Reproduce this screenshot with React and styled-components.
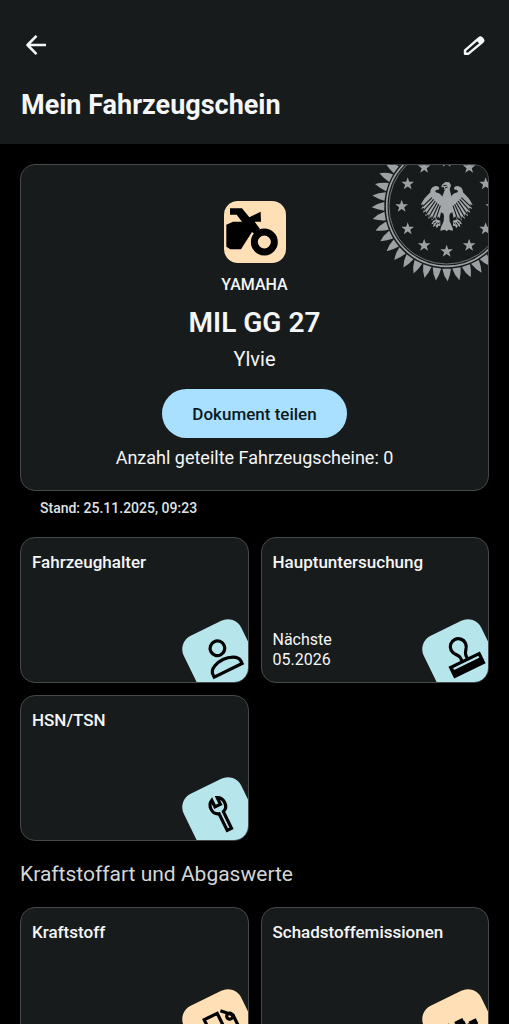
import React from "react";
import styled, { createGlobalStyle } from "styled-components";

const GlobalStyle = createGlobalStyle`
  * {
    box-sizing: border-box;
  }

  body {
    margin: 0;
    background: #000;
    color: #f4f6f7;
    font-family: Roboto, "Liberation Sans", sans-serif;
  }

  h1, h2, h3, p {
    margin: 0;
  }

  button {
    font-family: inherit;
    color: inherit;
    cursor: pointer;
  }
`;

const Screen = styled.div`
  display: flex;
  flex-direction: column;
  height: 100vh;
`;

const Header = styled.header`
  flex: none;
  background: #181b1c;
  padding: 24px 14px 20px 15px;
`;

const Toolbar = styled.div`
  display: flex;
  justify-content: space-between;
  margin-bottom: 20px;
`;

const IconButton = styled.button`
  display: flex;
  align-items: center;
  justify-content: center;
  width: 42px;
  height: 42px;
  padding: 0;
  border: 0;
  background: none;
`;

const Title = styled.h1`
  padding-left: 6px;
  font-size: 27px;
  font-weight: 700;
  line-height: 38px;
`;

const Content = styled.main`
  flex: 1;
  overflow-y: auto;
  scrollbar-width: none;
  padding: 20px;
`;

const DocumentCard = styled.section`
  position: relative;
  overflow: hidden;
  display: flex;
  flex-direction: column;
  align-items: center;
  padding: 36px 20px 20px;
  border: 1px solid #46494a;
  border-radius: 15px;
  background: #181b1c;
`;

const Seal = styled.svg`
  position: absolute;
  top: 0;
  right: 0;
  width: 117px;
  height: 117px;
`;

const VehicleIcon = styled.svg`
  width: 62px;
  height: 62px;
  border-radius: 14px;
  background: #fedfb6;
`;

const Brand = styled.p`
  margin-top: 12px;
  font-size: 16px;
  font-weight: 500;
  line-height: 20px;
`;

const Plate = styled.h2`
  margin-top: 8px;
  font-size: 28px;
  font-weight: 600;
  line-height: 40px;
`;

const Nickname = styled.p`
  margin-top: 2px;
  font-size: 20px;
  line-height: 28px;
`;

const ShareButton = styled.button`
  margin-top: 16px;
  padding: 0 30px;
  height: 49px;
  border: 0;
  border-radius: 25px;
  background: #a9e0ff;
  color: #0b1a22;
  font-size: 17px;
  font-weight: 500;
`;

const ShareCount = styled.p`
  margin-top: 8px;
  font-size: 18px;
  line-height: 24px;
`;

const Timestamp = styled.p`
  padding: 8px 20px 0;
  font-size: 14px;
  font-weight: 500;
  line-height: 18px;
  color: #dfe2e3;
`;

const TileGrid = styled.div`
  display: grid;
  grid-template-columns: 1fr 1fr;
  gap: 12px;
  margin-top: 20px;
`;

const Tile = styled.button`
  position: relative;
  overflow: hidden;
  display: flex;
  flex-direction: column;
  justify-content: space-between;
  min-height: 146px;
  padding: 12px 11px;
  border: 1px solid #46494a;
  border-radius: 15px;
  background: #181b1c;
  text-align: left;
`;

const TileTitle = styled.span`
  font-size: 17px;
  font-weight: 500;
  line-height: 24px;
`;

const TileNote = styled.span`
  font-size: 16px;
  line-height: 20px;
  white-space: pre-line;
`;

const TileBadge = styled.svg`
  position: absolute;
  right: -4px;
  bottom: -7px;
  width: 64px;
  height: 64px;
  border-radius: 15px;
  background: ${({ $warm }) => ($warm ? "#fedfb6" : "#b6e6ec")};
  transform: rotate(-26deg);
`;

const SectionTitle = styled.h2`
  margin-top: 20px;
  font-size: 21px;
  font-weight: 400;
  line-height: 26px;
  color: #d3d6d7;
`;

const STAR = "M0-20 4.7-6.5 19-6.2 7.6 2.5 11.8 16.2 0 8-11.8 16.2-7.6 2.5-19-6.2-4.7-6.5Z";

const BackIcon = () => (
  <svg
    width="28"
    height="28"
    viewBox="0 0 28 28"
    fill="none"
    stroke="currentColor"
    strokeWidth="2.6"
    aria-hidden="true"
  >
    <path d="M24 14H6M14.500 4.900 5.500 14l9 9.100" strokeLinejoin="round" />
  </svg>
);

const EditIcon = () => (
  <svg width="24" height="24" viewBox="0 0 24 24" aria-hidden="true">
    <path
      d="M3 20.700v-3.300L17 5.200a1.900 1.900 0 0 1 2.600 0l1 1a1.900 1.900 0 0 1 0 2.600L6.500 20.700z"
      fill="none"
      stroke="currentColor"
      strokeWidth="2.400"
      strokeLinejoin="round"
    />
    <path d="M14.200 7.200l3.300-2.900a1.900 1.900 0 0 1 2.500 0l1.200 1.200a1.900 1.900 0 0 1 0 2.500l-3.400 3z" fill="currentColor" />
  </svg>
);

const SealGraphic = () => (
  <Seal viewBox="18 30 351 351" aria-hidden="true">
    <g fill="#9ea1a3" transform="translate(245 154)">
      <circle r="180" fill="none" stroke="#9ea1a3" strokeWidth="5" />
      <circle r="173" fill="none" stroke="#9ea1a3" strokeWidth="2" />
      {Array.from({ length: 40 }, (_, i) => (
        <path key={i} d="M-13 187H13Q11 206 3 225Q-9 209-13 187Z" transform={`rotate(${i * 9})`} />
      ))}
      {Array.from({ length: 12 }, (_, i) => {
        const a = (i * Math.PI) / 6;
        return (
          <path key={i} d={STAR} transform={`translate(${Math.sin(a) * 135} ${Math.cos(a) * 135})`} />
        );
      })}
    </g>
    {/* federal eagle, right wing is the mirrored left one */}
    <g fill="#a4a7a9">
      {[false, true].map((flip) => (
        <g key={String(flip)} transform={flip ? "translate(490 0) scale(-1 1)" : undefined}>
          <path d="M236 132C231 120 223 113 217 113C209 112 209 104 219 104C226 103 223 93 213 93C202 94 196 102 196 112C190 119 181 126 174 137L167 150L175 148L169 162L178 158L174 173L184 168L181 184L191 177L190 192L200 184L200 197L209 187L212 198L219 184L224 190L228 172L236 176Z" />
          <path d="M226 197L214 193L204 198L199 208L206 206L204 216L211 212L216 220L220 212L226 213Z" />
          <path
            d="M201 128L173 155M206 133L176 167M211 138L183 178M216 143L191 187M221 148L201 192M226 152L212 193"
            stroke="#181b1c"
            strokeWidth="3.5"
            fill="none"
          />
          <path d="M205 205l8-5M211 212l6-9M219 207l5-4" stroke="#181b1c" strokeWidth="3" />
        </g>
      ))}
      <path d="M231 89L241 81L253 82L258 91L254 103L258 119L261 132L260 157L253 183L254 199L263 219L264 227L250 224L245 229L240 224L226 227L227 219L236 199L237 183L230 157L229 132L234 119L239 106L237 97L229 97Z" />
      <path d="M235 92L245 91M240 99l8-3" stroke="#181b1c" strokeWidth="3" />
    </g>
  </Seal>
);

const MotorcycleIcon = () => (
  <VehicleIcon viewBox="0 0 186 186" aria-hidden="true">
    <path d="M18 22H54L76 49L110 32L111 62H92L108 84L91 99L84 93L51 145H19L7 137V71L27 62H54L38 41H18Z" />
    <circle cx="121" cy="123" r="30" fill="none" stroke="#000" strokeWidth="21" />
  </VehicleIcon>
);

const PersonShape = () => (
  <>
    <circle cx="33.500" cy="23" r="7.300" />
    <path d="M18 47.500v-3c0-6 9-9 15.500-9s15.500 3 15.500 9v3z" />
  </>
);

const StampShape = () => (
  <>
    <path d="M32 37v-4c0-4-5-5.500-5-11a8 8 0 0 1 16 0c0 5.500-5 7-5 11v4" />
    <path d="M17.300 35.800h35v13h-35z" fill="#000" stroke="none" />
    <path d="M21 40h28" stroke="#b6e6ec" strokeWidth="2" />
  </>
);

const WrenchShape = () => (
  <path d="M31.700 49V30.500C28.500 29.500 26.500 26.500 26.500 22.800c0-3.600 1.800-6.300 4.600-7.600V22.500h6V15.200c2.800 1.300 4.600 4 4.600 7.600 0 3.700-2 6.700-5.200 7.700V49z" />
);

const FuelShape = () => (
  <>
    <path d="M21 49V18.500h14.500V49M17 48.500h22M21 31h14.500" />
    <path d="M39.500 17.500l9.500 9.500V44a4 4 0 0 1-8 0v-5a4 4 0 0 0-5-4" />
    <circle cx="45.500" cy="26.500" r="3" />
  </>
);

const EngineShape = () => (
  <>
    <path d="M19 27l4 4M22 25l4 4M29 28v6h-7v14h20V35" />
    <path d="M29 27.500h9M42 33.500h8" strokeWidth="5" />
    <path d="M37 28v6h5M48 34v14h-6" />
  </>
);

const mainTiles = [
  { title: "Fahrzeughalter", Shape: PersonShape },
  { title: "Hauptuntersuchung", note: "Nächste\n05.2026", Shape: StampShape },
  { title: "HSN/TSN", Shape: WrenchShape },
];

const emissionTiles = [
  { title: "Kraftstoff", Shape: FuelShape },
  { title: "Schadstoffemissionen", Shape: EngineShape },
];

const Tiles = ({ items, warm }) => (
  <TileGrid>
    {items.map(({ title, note, Shape }) => (
      <Tile key={title} type="button">
        <TileTitle>{title}</TileTitle>
        {note && <TileNote>{note}</TileNote>}
        <TileBadge
          $warm={warm}
          viewBox="0 0 64 64"
          fill="none"
          stroke="#000"
          strokeWidth="3.2"
          aria-hidden="true"
        >
          <Shape />
        </TileBadge>
      </Tile>
    ))}
  </TileGrid>
);

const App = () => {
  return (
    <Screen>
      <GlobalStyle />
      <Header>
        <Toolbar>
          <IconButton type="button" aria-label="Zurück">
            <BackIcon />
          </IconButton>
          <IconButton type="button" aria-label="Bearbeiten">
            <EditIcon />
          </IconButton>
        </Toolbar>
        <Title>Mein Fahrzeugschein</Title>
      </Header>
      <Content>
        <DocumentCard>
          <SealGraphic />
          <MotorcycleIcon />
          <Brand>YAMAHA</Brand>
          <Plate>MIL GG 27</Plate>
          <Nickname>Ylvie</Nickname>
          <ShareButton type="button">Dokument teilen</ShareButton>
          <ShareCount>Anzahl geteilte Fahrzeugscheine: 0</ShareCount>
        </DocumentCard>
        <Timestamp>Stand: 25.11.2025, 09:23</Timestamp>
        <Tiles items={mainTiles} />
        <SectionTitle>Kraftstoffart und Abgaswerte</SectionTitle>
        <Tiles items={emissionTiles} warm />
      </Content>
    </Screen>
  );
};

export default App;
